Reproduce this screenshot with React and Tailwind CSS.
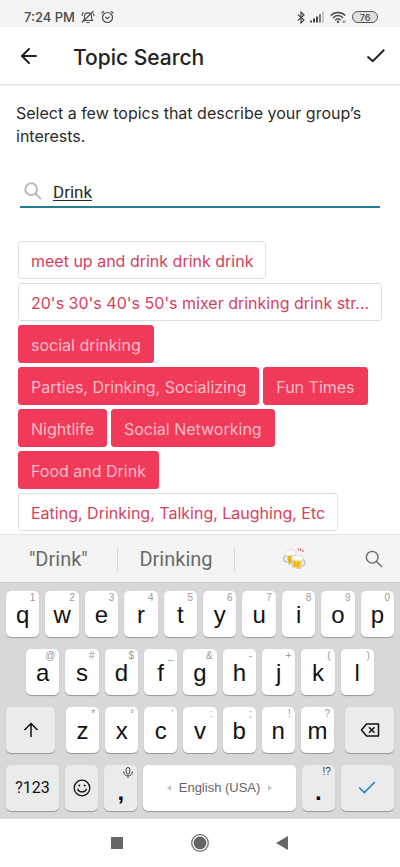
import { useState } from 'react'
import { ArrowLeft, Check } from 'lucide-react'

const TOPICS = [
  { name: 'meet up and drink drink drink', selected: false },
  { name: "20's 30's 40's 50's mixer drinking drink str...", selected: false },
  { name: 'social drinking', selected: true },
  { name: 'Parties, Drinking, Socializing', selected: true },
  { name: 'Fun Times', selected: true },
  { name: 'Nightlife', selected: true },
  { name: 'Social Networking', selected: true },
  { name: 'Food and Drink', selected: true },
  { name: 'Eating, Drinking, Talking, Laughing, Etc', selected: false },
]

const TOP_ROW = [['q', '1'], ['w', '2'], ['e', '3'], ['r', '4'], ['t', '5'], ['y', '6'], ['u', '7'], ['i', '8'], ['o', '9'], ['p', '0']]
const HOME_ROW = [['a', '@'], ['s', '#'], ['d', '$'], ['f', '_'], ['g', '&'], ['h', '-'], ['j', '+'], ['k', '('], ['l', ')']]
const BOTTOM_ROW = [['z', '*'], ['x', '°'], ['c', "'"], ['v', ':'], ['b', ';'], ['n', '!'], ['m', '?']]

export default function App() {
  const [query, setQuery] = useState('Drink')
  const [topics, setTopics] = useState(TOPICS)

  const toggle = (name) => {
    setTopics(list => list.map(t => (t.name === name ? { ...t, selected: !t.selected } : t)))
  }

  return (
    <div className="flex h-screen flex-col bg-white font-['Inter',sans-serif] text-[#2b2b2b]">
      <StatusBar />

      <header className="z-10 flex h-[57px] shrink-0 items-center bg-white pl-[17px] pr-[14px] shadow-[0_1px_2px_rgba(0,0,0,0.15)]">
        <button aria-label="Back" className="flex w-6 justify-center">
          <ArrowLeft size={24} strokeWidth={2} className="text-[#222]" />
        </button>
        <h1 className="ml-8 flex-1 pt-1 text-[21px] font-medium leading-7 text-[#222]">Topic Search</h1>
        <button aria-label="Done" className="flex w-5 justify-center">
          <DoneIcon />
        </button>
      </header>

      <main className="min-h-0 flex-1 overflow-hidden pt-[18px]">
        <p className="px-4 text-base leading-[23px]">
          Select a few topics that describe your group’s interests.
        </p>

        <label className="mx-5 mt-7 flex h-8 items-center gap-[11px] border-b-2 border-[#1f8093] pl-1">
          <SearchIcon className="h-[18px] w-[18px] shrink-0 text-[#b9b9b9]" strokeWidth="2.2" />
          <input
            type="text"
            aria-label="Search topics"
            value={query}
            onChange={(e) => setQuery(e.target.value)}
            className="w-full bg-transparent pt-1 font-['Roboto',sans-serif] text-[17px] underline underline-offset-2 outline-none"
          />
        </label>

        <div className="mt-[33px] flex flex-wrap gap-1 pl-[18px] pr-[14px]">
          {topics.map(t => (
            <Topic key={t.name} topic={t} onClick={() => toggle(t.name)} />
          ))}
        </div>
      </main>

      <Keyboard />
      <NavBar />
    </div>
  )
}

function Topic({ topic, onClick }) {
  return (
    <button
      onClick={onClick}
      className={`h-[38px] max-w-full truncate rounded-[3px] border px-3 pt-[2px] text-base ${
        topic.selected
          ? 'border-[#f13a59] bg-[#f13a59] text-[#ffbcc8]'
          : 'border-[#dfdfdf] bg-white text-[#d63f5d]'
      }`}
    >
      {topic.name}
    </button>
  )
}

function StatusBar() {
  return (
    <div className="flex h-[27px] shrink-0 items-center justify-between bg-[#f4f4f4] pl-6 pr-[22px] pt-[7px] text-[#4a4a4a]">
      <div className="flex items-center gap-[6px]">
        <span className="text-[13px] font-medium leading-4">7:24 PM</span>
        <BellOffIcon />
        <AlarmIcon />
      </div>
      <div className="flex items-center gap-[5px]">
        <BluetoothIcon />
        <SignalIcon />
        <WifiIcon />
        <span className="flex h-3 w-[26px] items-center justify-center rounded-full border border-[#555] bg-[#e0e0e0] text-[9px] font-medium leading-none">76</span>
      </div>
    </div>
  )
}

function Keyboard() {
  return (
    <section aria-label="Keyboard" className="shrink-0 font-['Liberation_Sans',sans-serif]">
      {/* Suggestions */}
      <div className="flex h-12 items-center border-t border-[#e6e6e6] bg-[#f4f4f4] pt-px font-['Roboto',sans-serif] text-xl text-[#6a6a6a]">
        <button className="h-6 flex-1 leading-6">"Drink"</button>
        <button className="h-6 flex-1 border-x border-[#d9d9d9] leading-6">Drinking</button>
        <button aria-label="Clinking beer mugs" className="flex flex-1 justify-center">
          <BeersIcon />
        </button>
        <button aria-label="Search" className="flex w-12 justify-start pl-[13px]">
          <SearchIcon className="h-[18px] w-[18px]" strokeWidth="1.5" />
        </button>
      </div>

      <div className="flex flex-col gap-3 border-t border-[#cfcfcf] bg-[#d8d8d8] px-[6px] pb-2 pt-2">
        <div className="flex gap-[6px]">
          {TOP_ROW.map(([letter, hint]) => <LetterKey key={letter} letter={letter} hint={hint} />)}
        </div>

        <div className="flex gap-[6px] px-5">
          {HOME_ROW.map(([letter, hint]) => <LetterKey key={letter} letter={letter} hint={hint} />)}
        </div>

        <div className="flex gap-[11px]">
          <Key label="Shift" className="w-[49px] bg-[#ebebeb]">
            <ShiftIcon />
          </Key>
          <div className="flex flex-1 gap-[6px]">
            {BOTTOM_ROW.map(([letter, hint]) => <LetterKey key={letter} letter={letter} hint={hint} />)}
          </div>
          <Key label="Backspace" className="w-[49px] bg-[#ebebeb]">
            <BackspaceIcon />
          </Key>
        </div>

        <div className="flex gap-[6px]">
          <Key className="flex-[53] bg-[#ebebeb] font-['Roboto',sans-serif] text-base">?123</Key>
          <Key label="Emoji" className="flex-[33] bg-[#ebebeb]">
            <SmileIcon />
          </Key>
          <Key label="Comma" className="flex-[33] bg-[#ebebeb] text-2xl font-bold" hint={<MicIcon />}>
            <span className="pt-2">,</span>
          </Key>
          <Key className="flex-[152] gap-2 bg-white text-[13px]">
            <CaretIcon d="M4 0V6L0 3Z" />
            <span className="text-[#666]">English (USA)</span>
            <CaretIcon d="M0 0V6L4 3Z" />
          </Key>
          <Key label="Period" className="flex-[33] bg-[#ebebeb] text-2xl font-bold" hint={<span className="text-[#333]">!?</span>}>
            <span className="pt-2">.</span>
          </Key>
          <Key label="Enter" className="flex-[53] bg-[#ebebeb]">
            <Check size={22} strokeWidth={1.8} className="text-[#2489c5]" />
          </Key>
        </div>
      </div>
    </section>
  )
}

function Key({ label, hint, className, children }) {
  return (
    <button
      aria-label={label}
      className={`relative flex h-[46px] min-w-0 items-center justify-center rounded-[5px] text-[#111] shadow-[0_1px_1px_rgba(0,0,0,0.3)] ${className}`}
    >
      {hint && <span className="absolute right-1 top-[2px] text-[10px] font-normal leading-[10px] text-[#999]">{hint}</span>}
      {children}
    </button>
  )
}

function LetterKey({ letter, hint }) {
  return (
    <Key className="flex-1 bg-white text-2xl" hint={hint}>
      <span className="pt-[2px]">{letter}</span>
    </Key>
  )
}

function NavBar() {
  return (
    <nav className="grid h-12 shrink-0 grid-cols-3 place-items-center bg-white px-[19%] text-[#666]">
      <button aria-label="Recent apps" className="h-3 w-3 bg-[#666]" />
      <button aria-label="Home">
        <svg width="18" height="18" viewBox="0 0 18 18" fill="none">
          <circle cx="9" cy="9" r="8.3" stroke="currentColor" strokeWidth="1.2" />
          <circle cx="9" cy="9" r="6.4" fill="currentColor" />
        </svg>
      </button>
      <button aria-label="Go back">
        <svg width="14" height="14" viewBox="0 0 14 14" fill="currentColor">
          <path d="M0 7L12 0V14Z" />
        </svg>
      </button>
    </nav>
  )
}

function DoneIcon() {
  return (
    <svg width="20" height="16" viewBox="0 0 20 16" fill="none" stroke="#222" strokeWidth="2">
      <path d="M1.5 8.5L6.8 13.2L18.2 1.8" />
    </svg>
  )
}

function SearchIcon({ className, strokeWidth }) {
  return (
    <svg className={className} viewBox="0 0 20 20" fill="none" stroke="currentColor" strokeWidth={strokeWidth}>
      <circle cx="8" cy="8" r="6.5" />
      <path d="M12.7 12.7L19 19" />
    </svg>
  )
}

function CaretIcon({ d }) {
  return (
    <svg width="4" height="6" viewBox="0 0 4 6" fill="#c4c4c4">
      <path d={d} />
    </svg>
  )
}

function ShiftIcon() {
  return (
    <svg width="16" height="16" viewBox="0 0 16 16" fill="none" stroke="currentColor" strokeWidth="1.5">
      <path d="M8 15V1.5M1.5 8L8 1.5L14.5 8" />
    </svg>
  )
}

function BackspaceIcon() {
  return (
    <svg width="20" height="14" viewBox="0 0 20 14" fill="none" stroke="currentColor" strokeWidth="1.5" strokeLinejoin="round">
      <path d="M6.5 1H18.5V13H6.5L1.5 7Z" />
      <path d="M9 4.3L14.5 9.7M14.5 4.3L9 9.7" />
    </svg>
  )
}

function SmileIcon() {
  return (
    <svg width="18" height="18" viewBox="0 0 18 18" fill="none" stroke="currentColor" strokeWidth="1.3">
      <circle cx="9" cy="9" r="7.8" />
      <path d="M4.8 10.2C6 13.8 12 13.8 13.2 10.2" strokeLinecap="round" />
      <circle cx="6.3" cy="6.5" r="1" fill="currentColor" stroke="none" />
      <circle cx="11.7" cy="6.5" r="1" fill="currentColor" stroke="none" />
    </svg>
  )
}

function MicIcon() {
  return (
    <svg width="10" height="11" viewBox="0 0 10 11" fill="none" stroke="#444" strokeWidth="1">
      <rect x="3.2" y="0.5" width="3.6" height="6.5" rx="1.8" />
      <path d="M0.6 4.5C0.6 10.3 9.4 10.3 9.4 4.5M5 9V11" />
    </svg>
  )
}

function BellOffIcon() {
  return (
    <svg width="14" height="14" viewBox="0 0 14 14" fill="none" stroke="currentColor" strokeWidth="1.1">
      <path d="M2.5 10.5C4 9 3.3 7.5 3.5 5.5C4 2 10 2 10.5 5.5C10.7 7.5 10 9 11.5 10.5ZM5.5 12.5H8.5" />
      <path d="M1 12.5L12.5 1M1 6C1 4.5 1.4 3.2 2.3 2.2M13 6C13 4.8 12.8 4 12.3 3.2" />
    </svg>
  )
}

function AlarmIcon() {
  return (
    <svg width="13" height="14" viewBox="0 0 13 14" fill="none" stroke="currentColor" strokeWidth="1.2">
      <circle cx="6.5" cy="7.5" r="5" />
      <path d="M4.3 6.8L6.4 8.7L8.8 6.6M0.6 3.3L3 1.2M12.4 3.3L10 1.2" />
    </svg>
  )
}

function BluetoothIcon() {
  return (
    <svg width="8" height="13" viewBox="0 0 8 13" fill="none" stroke="currentColor" strokeWidth="1.2">
      <path d="M0.8 3.5L7 9L4 12V1L7 4L0.8 9.5" />
    </svg>
  )
}

function SignalIcon() {
  return (
    <svg width="15" height="12" viewBox="0 0 15 12" fill="currentColor">
      <rect x="0" y="9.5" width="2" height="2" />
      <rect x="3" y="7.5" width="2" height="4" />
      <rect x="6" y="5.5" width="2" height="6" />
      <rect x="9" y="3" width="2" height="8.5" opacity="0.7" />
      <rect x="12" y="0.5" width="2" height="11" opacity="0.25" />
    </svg>
  )
}

function WifiIcon() {
  return (
    <svg width="17" height="13" viewBox="0 0 17 13" fill="none" stroke="currentColor" strokeWidth="1.5">
      <path d="M0.8 4.6C4.5 0.4 11.5 0.4 15.2 4.6M3 7C5.8 3.8 10.2 3.8 13 7M5.2 9.2C6.8 7.3 9.2 7.3 10.8 9.2" />
      <circle cx="8" cy="10.8" r="1.2" fill="currentColor" stroke="none" />
      <path d="M13.3 9.5V12M15 9.5V12" strokeWidth="0.9" opacity="0.8" />
    </svg>
  )
}

function BeersIcon() {
  return (
    <svg width="24" height="24" viewBox="0 0 24 24" fill="none">
      {/* back mug */}
      <path d="M5 8.5C0.5 8 0.5 15.5 5.5 15" stroke="#c4c9cc" strokeWidth="1.8" />
      <path d="M4.5 6L13 5.5L13.5 16L6.5 17.5Z" fill="#f6c417" stroke="#d3d3cc" />
      <path d="M7.5 9.500V15.500M10.500 9V15" stroke="#d99a0b" strokeWidth="1.2" />
      <path d="M4 9C2.5 4 5 2.5 7.500 3.500C10 2 14.500 3 14 7.500C11 9.500 7 8 4 9Z" fill="#fcfcfc" stroke="#d6d6d6" strokeWidth="0.7" />
      {/* front mug */}
      <path d="M20 12.5C24.500 12.5 23.500 20 18.500 19" stroke="#c4c9cc" strokeWidth="1.8" />
      <path d="M11 11L20 12L18.500 22L10 20Z" fill="#fbd02b" stroke="#d3d3cc" />
      <path d="M13 14.500L12.500 19M16.500 15L15.500 20" stroke="#e5a50c" strokeWidth="1.3" />
      <path d="M10.500 13.500C8.500 10 11 8 14 9C17 8 22 9 21 13C17.500 15 14 12.500 10.500 13.500Z" fill="#fcfcfc" stroke="#d6d6d6" strokeWidth="0.7" />
      {/* splash */}
      <path d="M16 1.5L17 3.5M18.5 1.5L19 4M21.5 3L20.5 5" stroke="#dc5148" strokeWidth="1.1" />
    </svg>
  )
}
